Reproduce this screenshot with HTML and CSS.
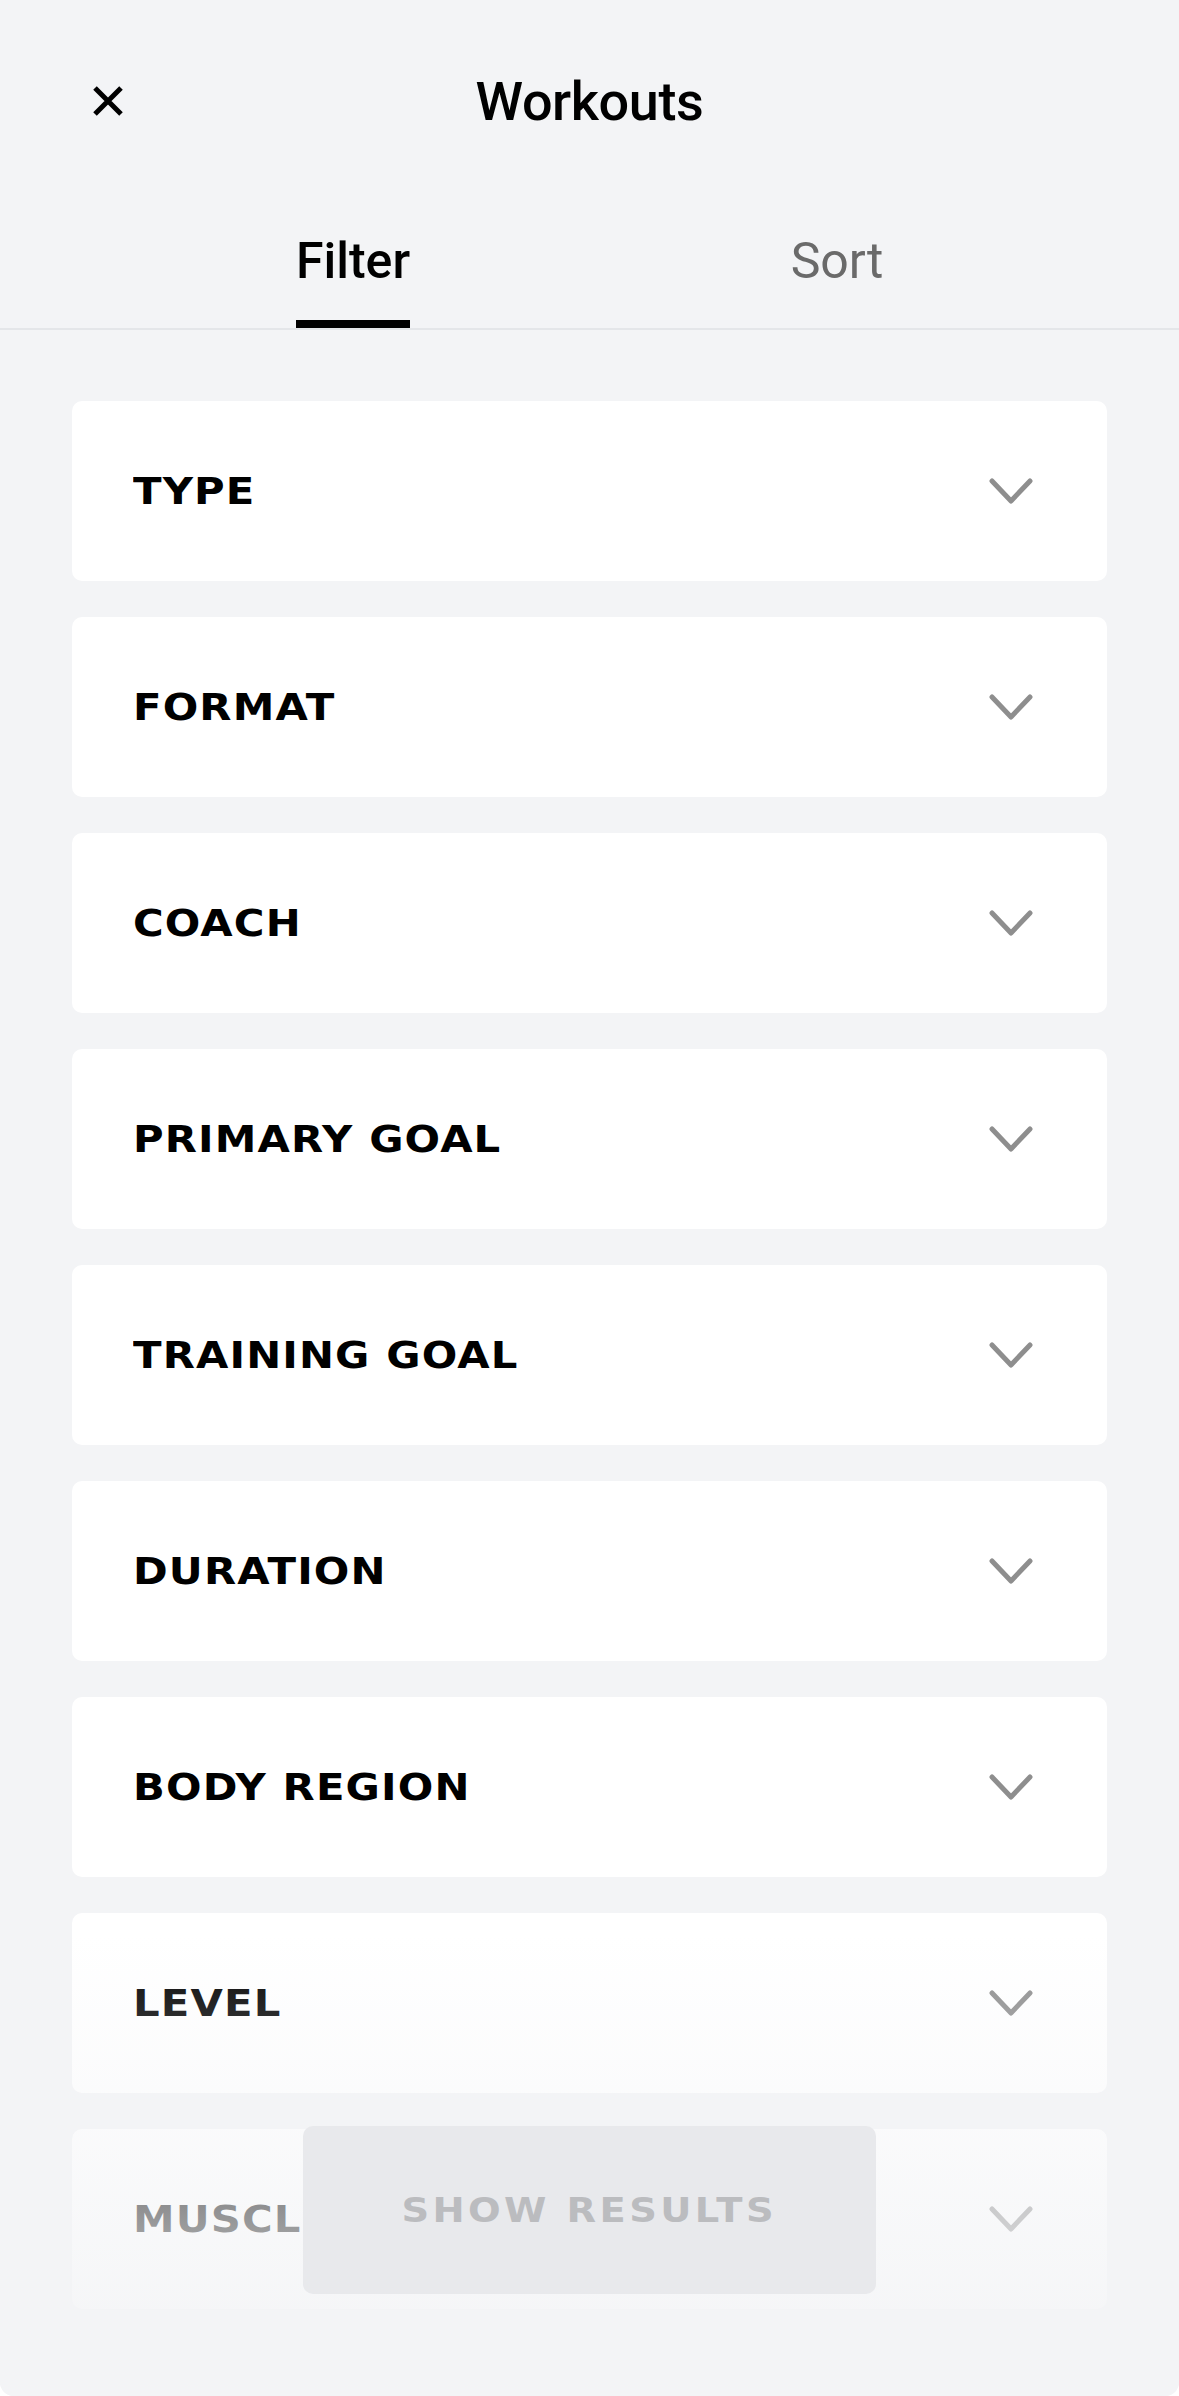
FILE: index.html
```html
<!DOCTYPE html>
<html lang="en">
<head>
    <meta charset="UTF-8">
    <meta name="viewport" content="width=device-width, initial-scale=1.0">
    <title>Workouts</title>
    <link rel="stylesheet" href="styles.css">
</head>
<body>

    <div class="sheet">

        <!-- Top bar -->
        <div class="topbar">
            <button class="close-btn" aria-label="Close">
                <svg width="32" height="32" viewBox="0 0 32 32">
                    <path d="M3 3 L29 29 M29 3 L3 29" stroke="#000" stroke-width="5" fill="none"/>
                </svg>
            </button>
            <h1 class="title">Workouts</h1>
            <div></div>
        </div>

        <!-- Tabs -->
        <div class="tabs">
            <div class="tab active">
                <span class="tab-label">Filter</span>
            </div>
            <div class="tab">
                <span class="tab-label">Sort</span>
            </div>
        </div>

        <!-- Filter list -->
        <div class="filter-list">
            <div class="filter-row"><span class="filter-name">TYPE</span><svg class="chevron" width="46" height="28" viewBox="0 0 46 28"><polyline points="4,4 23,24 42,4" /></svg></div>
            <div class="filter-row"><span class="filter-name">FORMAT</span><svg class="chevron" width="46" height="28" viewBox="0 0 46 28"><polyline points="4,4 23,24 42,4" /></svg></div>
            <div class="filter-row"><span class="filter-name">COACH</span><svg class="chevron" width="46" height="28" viewBox="0 0 46 28"><polyline points="4,4 23,24 42,4" /></svg></div>
            <div class="filter-row"><span class="filter-name">PRIMARY GOAL</span><svg class="chevron" width="46" height="28" viewBox="0 0 46 28"><polyline points="4,4 23,24 42,4" /></svg></div>
            <div class="filter-row"><span class="filter-name">TRAINING GOAL</span><svg class="chevron" width="46" height="28" viewBox="0 0 46 28"><polyline points="4,4 23,24 42,4" /></svg></div>
            <div class="filter-row"><span class="filter-name">DURATION</span><svg class="chevron" width="46" height="28" viewBox="0 0 46 28"><polyline points="4,4 23,24 42,4" /></svg></div>
            <div class="filter-row"><span class="filter-name">BODY REGION</span><svg class="chevron" width="46" height="28" viewBox="0 0 46 28"><polyline points="4,4 23,24 42,4" /></svg></div>
            <div class="filter-row"><span class="filter-name">LEVEL</span><svg class="chevron" width="46" height="28" viewBox="0 0 46 28"><polyline points="4,4 23,24 42,4" /></svg></div>
            <div class="filter-row"><span class="filter-name">MUSCLE GROUP</span><svg class="chevron" width="46" height="28" viewBox="0 0 46 28"><polyline points="4,4 23,24 42,4" /></svg></div>
        </div>

        <!-- Fade + results button -->
        <div class="fade"></div>
        <button class="results-btn"><span class="results-text">SHOW RESULTS</span></button>
    </div>

</body>
</html>
```

FILE: styles.css
```css
body {
    margin: 0;
    padding: 0;
    background: #ffffff;
    font-family: Roboto, "Liberation Sans", sans-serif;
}
.sheet {
    position: relative;
    height: 2396px;
    background-color: #f3f4f6;
    border-radius: 0 0 14px 14px;
    overflow: hidden;
}
.topbar {
    display: grid;
    grid-template-columns: 1fr auto 1fr;
    align-items: center;
    height: 202px;
}
.close-btn {
    justify-self: start;
    margin-left: 92px;
    padding: 0;
    background: none;
    border: none;
    width: 32px;
    height: 32px;
}
.close-btn svg {
    display: block;
}
.title {
    margin: 0;
    font-size: 54px;
    font-weight: 500;
    color: #000;
    letter-spacing: -0.4px;
}
.tabs {
    display: flex;
    padding: 0 100px 0 111px;
    border-bottom: 2px solid #e4e6e9;
}
.tab {
    flex: 1;
    display: flex;
    justify-content: center;
}
.tab-label {
    display: inline-block;
    padding: 30px 0 30px;
    font-size: 50px;
    line-height: 58px;
    color: #6a6a6a;
    border-bottom: 8px solid transparent;
}
.tab.active .tab-label {
    color: #000;
    font-weight: 500;
    border-bottom-color: #000;
}
.filter-list {
    display: flex;
    flex-direction: column;
    gap: 36px;
    padding: 71px 72px 0;
}
.filter-row {
    display: flex;
    align-items: center;
    justify-content: space-between;
    height: 180px;
    padding: 0 73px 0 61px;
    background: #ffffff;
    border-radius: 10px;
}
/* wide display face: stretch DejaVu bold horizontally */
.filter-name {
    display: inline-block;
    font-family: "DejaVu Sans", sans-serif;
    font-weight: bold;
    font-size: 37px;
    letter-spacing: 1px;
    color: #000;
    transform: scaleX(1.13);
    transform-origin: left center;
}
.chevron polyline {
    fill: none;
    stroke: #8e8e8e;
    stroke-width: 5;
    stroke-linecap: round;
    stroke-linejoin: round;
}
.fade {
    position: absolute;
    left: 0;
    right: 0;
    top: 1935px;
    bottom: 0;
    background: linear-gradient(rgba(243, 244, 246, 0), rgba(243, 244, 246, 1));
}
.results-btn {
    position: absolute;
    left: 303px;
    bottom: 102px;
    width: 573px;
    height: 168px;
    border: none;
    border-radius: 10px;
    background: #e8e9ec;
}
.results-text {
    display: inline-block;
    font-family: "DejaVu Sans", sans-serif;
    font-weight: bold;
    font-size: 34px;
    letter-spacing: 3px;
    color: #bbbcbf;
    transform: scaleX(1.13);
}
```
